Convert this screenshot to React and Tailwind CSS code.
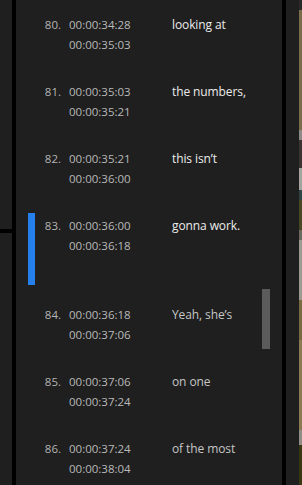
import React from 'react';

const rows = [
  { n: 80, a: '00:00:34:28', b: '00:00:35:03', t: 'looking at' },
  { n: 81, a: '00:00:35:03', b: '00:00:35:21', t: 'the numbers,' },
  { n: 82, a: '00:00:35:21', b: '00:00:36:00', t: 'this isn’t' },
  { n: 83, a: '00:00:36:00', b: '00:00:36:18', t: 'gonna work.', active: true },
  { n: 84, a: '00:00:36:18', b: '00:00:37:06', t: 'Yeah, she’s', dim: true },
  { n: 85, a: '00:00:37:06', b: '00:00:37:24', t: 'on one', dim: true },
  { n: 86, a: '00:00:37:24', b: '00:00:38:04', t: 'of the most', dim: true },
];

// thin slice of the video frame on the right edge
const strip = [
  ['h-[10px]', 'bg-[#2a2a2a]'],
  ['h-[120px]', 'bg-[#7b6c4c]'],
  ['h-[10px]', 'bg-[#8c8a84]'],
  ['h-[28px]', 'bg-[#3b3432]'],
  ['h-[22px]', 'bg-[#a4a49e]'],
  ['h-[10px]', 'bg-[#2f4444]'],
  ['h-[30px]', 'bg-[#4a4824]'],
  ['h-[10px]', 'bg-[#6b6a60]'],
  ['h-[60px]', 'bg-[#9c9a90]'],
  ['h-[40px]', 'bg-[#7a6a42]'],
  ['h-[90px]', 'bg-[#8b7a52]'],
  ['h-[15px]', 'bg-[#8f8d86]'],
  ['h-[40px]', 'bg-[#3a3812]'],
];

const Row = ({ r }) => (
  <div className={`flex items-start ${r.active ? 'h-[89px]' : 'h-[67px]'}`}>
    <div className="w-[19px] pl-[12px] shrink-0">
      {r.active && <div className="mt-[12px] h-[72px] w-[7px] bg-[#2680eb]" />}
    </div>
    <div className="w-[26px] shrink-0 pt-[14.5px] text-right text-[#b4b4b4] leading-[20px]">{r.n}.</div>
    <div className="ml-[8px] w-[103px] shrink-0 pt-[14.5px] text-[#b9b9b9] leading-[20px]">
      <div>{r.a}</div>
      <div>{r.b}</div>
    </div>
    <div className={`pt-[14.5px] leading-[20px] text-[12px] tracking-[-0.1px] ${r.dim ? 'text-[#c6c6c6]' : 'text-[#ececec]'}`}>{r.t}</div>
  </div>
);

export default function App() {
  return (
    <div
      className="flex h-[485px] w-[302px] overflow-hidden bg-[#1e1e1e] text-[11.5px]"
      style={{ fontFamily: '"Open Sans", "Noto Sans", sans-serif' }}
    >
      <div className="flex w-[12px] shrink-0 flex-col">
        <div className="h-[229px] bg-[#1f1f1f]" />
        <div className="h-[4px] bg-black" />
        <div className="flex-1 bg-[#1f1f1f]" />
      </div>
      <div className="w-[4px] shrink-0 bg-black" />
      <div className="relative w-[266px] shrink-0 bg-[#1f1f1f]">
        {rows.map((r) => (
          <Row key={r.n} r={r} />
        ))}
        <div className="absolute left-[246px] top-[289px] h-[60px] w-[8px] bg-[#5b5b5b]" />
      </div>
      <div className="w-[4px] shrink-0 bg-black" />
      <div className="w-[13px] shrink-0 bg-[#1f1f1f]" />
      <div className="flex w-[3px] shrink-0 flex-col">
        {strip.map(([h, c], i) => (
          <div key={i} className={`${h} ${c} shrink-0`} />
        ))}
      </div>
    </div>
  );
}
